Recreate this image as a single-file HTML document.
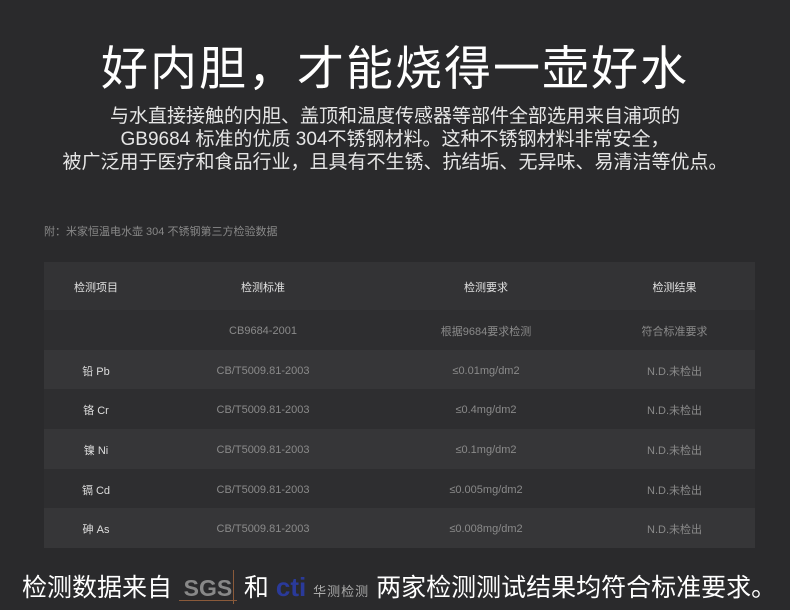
<!DOCTYPE html>
<html><head><meta charset="utf-8"><style>
body{margin:0;width:790px;height:610px;background:#2a2a2c;font-family:"Liberation Sans","Noto Sans CJK SC",sans-serif;position:relative;overflow:hidden;color:#fff}
.t{position:absolute;left:0;width:790px;text-align:center}
h1{position:absolute;left:0;width:790px;top:30px;margin:0;text-align:center;font-size:47px;font-weight:400;color:#fff;letter-spacing:2px}
.sub{top:105px;font-size:19px;line-height:23px;color:#e6e6e6}
.note{position:absolute;left:44px;top:223px;font-size:11px;color:#888}
table{position:absolute;left:44px;top:262px;width:711px;border-collapse:collapse;font-size:11px}
td{text-align:center;height:39.7px;padding:0;color:#8a8a8a;padding-top:2px;box-sizing:border-box}
tr.h td{height:48px;background:#333335;color:#e0e0e0}
tr:nth-child(even) td{background:#2e2e30}
tr:nth-child(odd):not(.h) td{background:#363638}
td:first-child{color:#ddd;width:104px}
td:nth-child(2){width:230px}
td:nth-child(3){width:216px}
.bot{position:absolute;left:22px;top:568px;font-size:25px;color:#fff;white-space:nowrap}
</style></head><body>
<h1>好内胆，才能烧得一壶好水</h1>
<div class="t sub">与水直接接触的内胆、盖顶和温度传感器等部件全部选用来自浦项的<br>GB9684 标准的优质 304不锈钢材料。这种不锈钢材料非常安全，<br>被广泛用于医疗和食品行业，且具有不生锈、抗结垢、无异味、易清洁等优点。</div>
<div class="note">附：米家恒温电水壶 304 不锈钢第三方检验数据</div>
<table>
<tr class="h"><td>检测项目</td><td>检测标准</td><td>检测要求</td><td>检测结果</td></tr>
<tr><td></td><td>CB9684-2001</td><td>根据9684要求检测</td><td>符合标准要求</td></tr>
<tr><td>铅 Pb</td><td>CB/T5009.81-2003</td><td>≤0.01mg/dm2</td><td>N.D.未检出</td></tr>
<tr><td>铬 Cr</td><td>CB/T5009.81-2003</td><td>≤0.4mg/dm2</td><td>N.D.未检出</td></tr>
<tr><td>镍 Ni</td><td>CB/T5009.81-2003</td><td>≤0.1mg/dm2</td><td>N.D.未检出</td></tr>
<tr><td>镉 Cd</td><td>CB/T5009.81-2003</td><td>≤0.005mg/dm2</td><td>N.D.未检出</td></tr>
<tr><td>砷 As</td><td>CB/T5009.81-2003</td><td>≤0.008mg/dm2</td><td>N.D.未检出</td></tr>
</table>
<div class="bot">检测数据来自 <span style="display:inline-block;width:58px;position:relative;color:#888;font-weight:bold;font-size:23px;border-bottom:1px solid #8a5a3a;line-height:24px;text-align:center">SGS<span style="position:absolute;right:3px;top:-6px;height:34px;border-left:1px solid #8a5a3a"></span></span> 和 <span style="color:#2a3a9a;font-weight:bold;font-size:26px">cti</span> <span style="font-size:13px;color:#aaa;letter-spacing:1px">华测检测</span> 两家检测测试结果均符合标准要求。</div>
</body></html>
